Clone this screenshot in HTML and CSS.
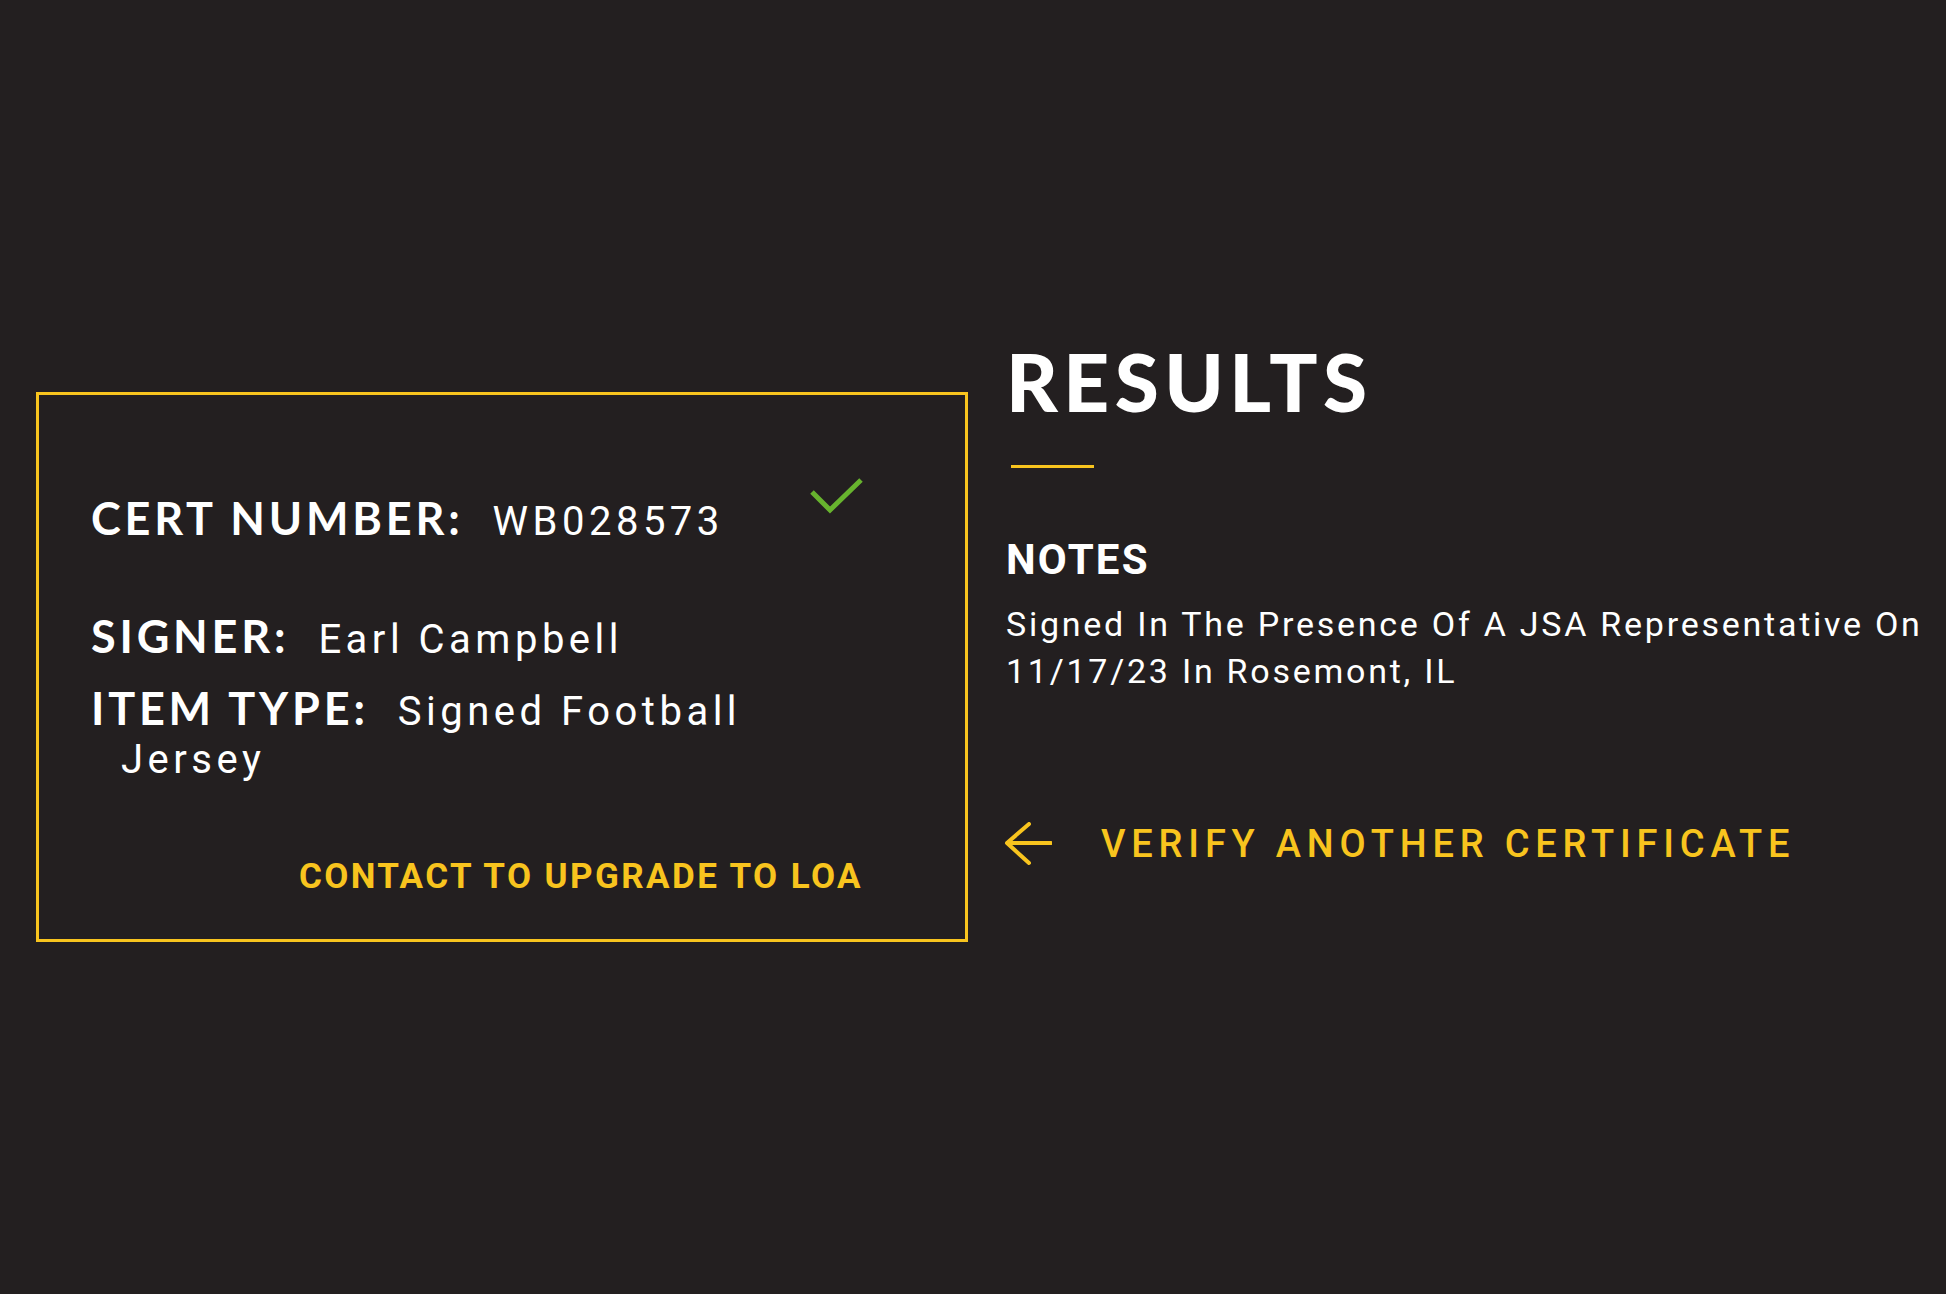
FILE: index.html
```html
<!DOCTYPE html>
<html lang="en">
<head>
<meta charset="utf-8">
<title>Results</title>
<link rel="stylesheet" href="styles.css">
</head>
<body>
<main class="page">
  <section class="card">
    <p class="row row-cert"><span class="label">CERT NUMBER:</span><span class="value">WB028573</span><svg class="check" width="57" height="38" viewBox="0 0 57 38" aria-hidden="true"><path d="M4 16 L22 34 L53 4" fill="none" stroke="#67b32e" stroke-width="5"/></svg></p>
    <p class="row row-signer"><span class="label">SIGNER:</span><span class="value">Earl Campbell</span></p>
    <p class="row row-item"><span class="label">ITEM TYPE:</span><span class="value">Signed Football<br>Jersey</span></p>
    <a class="upgrade" href="#">CONTACT TO UPGRADE TO LOA</a>
  </section>
  <section class="results">
    <h1 class="title">RESULTS</h1>
    <div class="rule"></div>
    <h2 class="notes-title">NOTES</h2>
    <p class="notes">Signed In The Presence Of A JSA Representative On<br>11/17/23 In Rosemont, IL</p>
    <a class="verify" href="#"><svg class="arrow" width="48" height="44" viewBox="0 0 48 44" aria-hidden="true"><path d="M47 21 H3 M25 2 L3 21 L25 41" fill="none" stroke="#f8c41e" stroke-width="4" stroke-linecap="round" stroke-linejoin="round"/></svg><span>VERIFY ANOTHER CERTIFICATE</span></a>
  </section>
</main>
</body>
</html>
```
FILE: styles.css
```css
html, body {
  margin: 0;
  padding: 0;
}
body {
  background: #231f20;
  color: #ffffff;
  font-family: Roboto, "Liberation Sans", sans-serif;
  width: 1946px;
  height: 1294px;
  overflow: hidden;
}
.page {
  display: flex;
  align-items: flex-start;
  gap: 38px;
  padding-left: 36px;
}
.card {
  box-sizing: border-box;
  width: 932px;
  height: 550px;
  margin-top: 392px;
  border: 3px solid #f8c41e;
  padding: 81px 102px 0 52px;
  display: flex;
  flex-direction: column;
}
.row {
  margin: 0;
  font-family: Roboto, "Liberation Sans", sans-serif;
  font-size: 40px;
  line-height: 48px;
  letter-spacing: 4.5px;
  white-space: nowrap;
}
.value-wide {
  letter-spacing: 5.5px;
}
.label {
  font-family: Lato, "Open Sans", sans-serif;
  font-weight: 700;
  font-size: 45px;
  letter-spacing: 3.8px;
  margin-right: 29px;
}
.row-signer { margin-top: 66px; }
.row-item {
  margin-top: 20px;
  padding-left: 30px;
  text-indent: -30px;
}
.check {
  vertical-align: 21px;
  margin-left: 84px;
}
.upgrade {
  margin-top: 69px;
  align-self: flex-end;
  color: #f8c41e;
  text-decoration: none;
  font-family: Roboto, "Liberation Sans", sans-serif;
  font-weight: 700;
  font-size: 35px;
  line-height: 48px;
  letter-spacing: 2.4px;
}
.results {
  flex: 1;
  padding-top: 341px;
}
.title {
  margin: 0;
  font-family: Lato, "Open Sans", sans-serif;
  font-weight: 900;
  font-size: 80px;
  line-height: 80px;
  letter-spacing: 5.4px;
}
.rule {
  width: 83px;
  height: 3px;
  margin: 44px 0 0 5px;
  background: #f8c41e;
}
.notes-title {
  margin: 67px 0 0 0;
  font-family: Roboto, "Liberation Sans", sans-serif;
  font-weight: 700;
  font-size: 42px;
  line-height: 50px;
  letter-spacing: 2.2px;
}
.notes {
  margin: 16px 0 0 0;
  font-size: 34px;
  line-height: 47px;
  letter-spacing: 2.75px;
  white-space: nowrap;
}
.verify {
  margin-top: 127px;
  display: flex;
  align-items: center;
  gap: 49px;
  color: #f8c41e;
  text-decoration: none;
  font-family: Roboto, "Liberation Sans", sans-serif;
  font-weight: 500;
  font-size: 38px;
  line-height: 44px;
  letter-spacing: 5.8px;
}
.arrow {
  display: block;
  margin-left: -2px;
}
```
